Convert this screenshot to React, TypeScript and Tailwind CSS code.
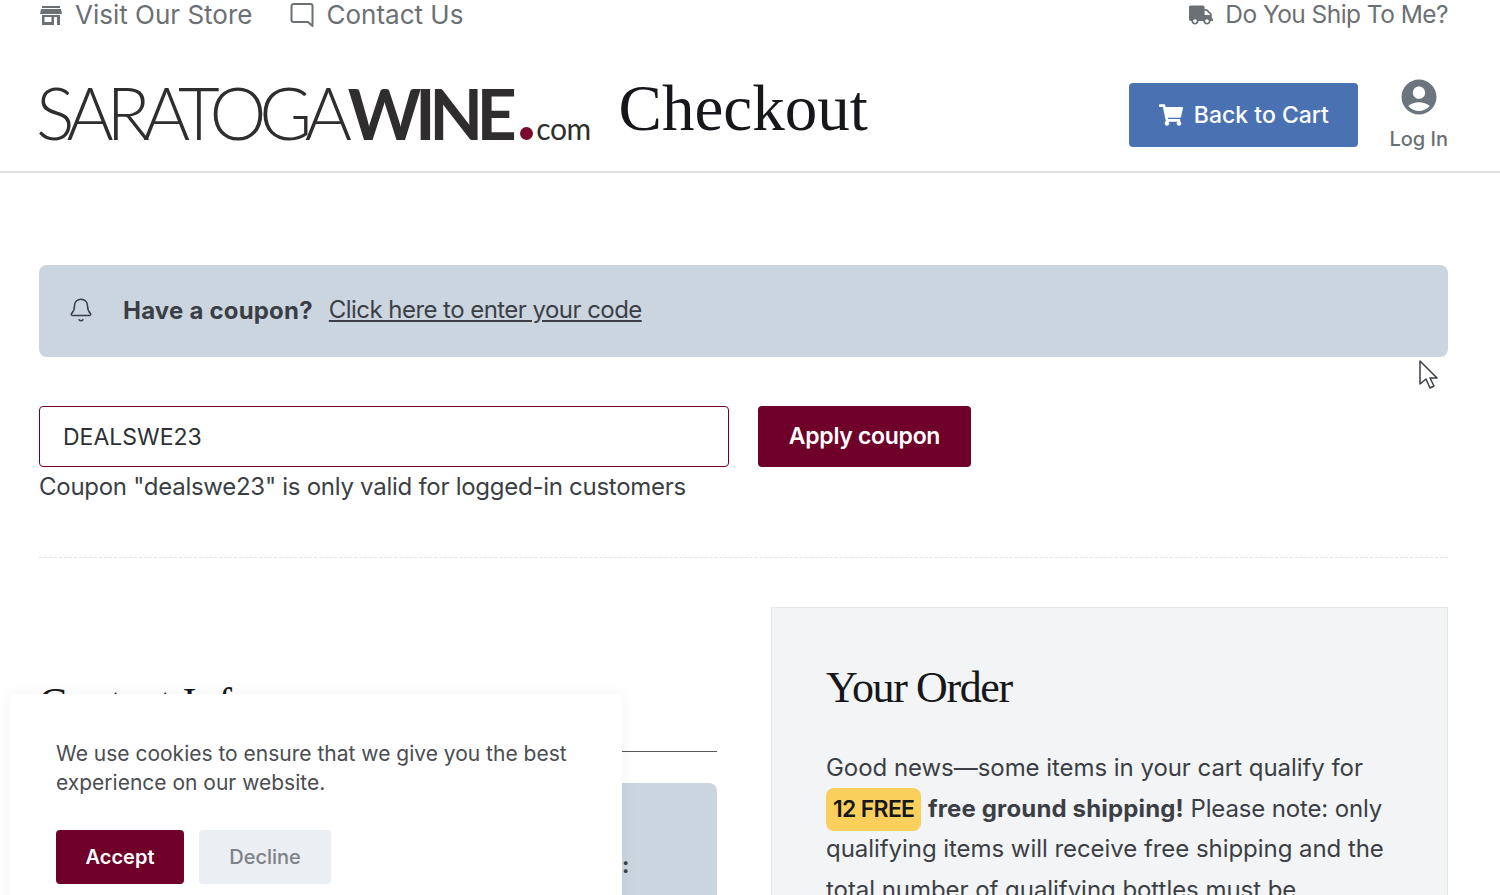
import React from "react";
import { FaShoppingCart, FaTruck } from "react-icons/fa";
import { MdAccountCircle } from "react-icons/md";
import { Bell } from "lucide-react";

const StoreIcon = () => (
  <svg width="24" height="22" viewBox="0 0 24 22" fill="#6b7075">
    <path d="M3 2h18v2H3z" />
    <path d="M2 5h20l1 5H1z" />
    <path d="M3 11h18v10h-3v-8h-3v8H3zM5.5 13v5h7v-5z" fillRule="evenodd" />
  </svg>
);

const ChatIcon = () => (
  <svg width="24" height="26" viewBox="0 0 24 26" fill="none" stroke="#6b7075" strokeWidth="2" strokeLinejoin="round">
    <path d="M3.5 2h17a2 2 0 0 1 2 2v20l-4.5-4H3.5a2 2 0 0 1-2-2V4a2 2 0 0 1 2-2z" />
  </svg>
);

const Cursor = () => (
  <svg width="20" height="30" viewBox="0 0 20 30" fill="#fff" stroke="#3a3f47" strokeWidth="1.5" strokeLinejoin="round">
    <path d="M1 1v23l6-5 4 9 4-2-4-8h7z" />
  </svg>
);

const Logo = () => (
  <div className="flex items-baseline -ml-[3px] -mt-[4px] font-['Lato',sans-serif] text-[#2f2d2e] leading-none">
    <span className="text-[72px] font-light tracking-[-7.2px]">SARATOGA</span>
    <span className="text-[70px] font-bold tracking-[-6.5px] ml-[3px]">WINE</span>
    <span className="ml-[10px] mr-[3px] w-[13px] h-[13px] rounded-full bg-[#7a0a2e]" />
    <span className="text-[30px] tracking-[-0.5px]">com</span>
  </div>
);

export default function App() {
  return (
    <div className="relative h-[895px] overflow-hidden bg-white font-['Inter',sans-serif] text-[#3b3f45]">
      {/* top links */}
      <div className="flex justify-between pl-[39px] pr-[52px] h-[29px] items-center text-[#6b7075]">
        <div className="flex gap-[38px] text-[26px]">
          <a className="flex items-center gap-[12px]"><StoreIcon /> Visit Our Store</a>
          <a className="flex items-center gap-[12px]"><ChatIcon /> Contact Us</a>
        </div>
        <a className="flex items-center gap-[12px] text-[24.5px] tracking-[-0.55px]"><FaTruck size={24} color="#6b7075" /> Do You Ship To Me?</a>
      </div>

      {/* header */}
      <header className="flex items-center justify-between h-[144px] pt-[28px] pl-[39px] pr-[52px] border-b-2 border-[#dddfe2]">
        <div className="flex items-center gap-[28px]">
          <Logo />
          <h1 className="font-['Liberation_Serif',serif] text-[65px] leading-none text-[#15171a] -mt-[12px]">Checkout</h1>
        </div>
        <div className="flex items-center gap-[31px]">
          <button className="flex items-center justify-center gap-[11px] w-[229px] h-[64px] mt-[2px] rounded bg-[#4a72b2] text-white text-[23px] font-medium">
            <FaShoppingCart size={24} /> Back to Cart
          </button>
          <div className="flex flex-col items-center text-[#6b7075] text-[20px] font-medium">
            <MdAccountCircle size={42} color="#6c757d" />
            <span className="mt-[8px] leading-[26px]">Log In</span>
          </div>
        </div>
      </header>

      <main className="pl-[39px] pr-[52px] pt-[92px]">
        {/* coupon notice */}
        <div className="flex items-center h-[92px] pb-[2px] rounded-lg bg-[#cbd5e0] pl-[29px] text-[24px]">
          <Bell size={26} strokeWidth={1.4} color="#3b3f45" />
          <strong className="ml-[29px] mt-[1px] font-bold tracking-[0.2px]">Have a coupon?</strong>
          <a className="ml-[16px] underline tracking-[-0.55px]">Click here to enter your code</a>
        </div>

        {/* coupon form */}
        <div className="flex gap-[29px] mt-[49px]">
          <input
            readOnly
            value="DEALSWE23"
            className="w-[690px] h-[61px] rounded border-[1.5px] border-[#74002a] px-[23px] text-[23px] text-[#2d3035] outline-none"
          />
          <button className="w-[213px] h-[61px] rounded bg-[#6f0029] text-white text-[23px] font-semibold tracking-[-0.3px]">Apply coupon</button>
        </div>
        <p className="mt-[4px] text-[24px] leading-[32px] tracking-[-0.27px]">Coupon "dealswe23" is only valid for logged-in customers</p>

        <div className="mt-[54px] border-t border-dashed border-[#e2e4e8]" />

        <div className="flex gap-[54px] mt-[49px]">
          {/* contact column */}
          <section className="w-[678px] pt-[72px]">
            <h2 className="font-['Liberation_Serif',serif] text-[42px] leading-[48px] text-[#15171a] pb-[24px] border-b border-[#55585c] tracking-[0.3px]">Contact Info</h2>
            <div className="mt-[31px] h-[200px] rounded-t-lg bg-[#cbd5e0] pl-[583px] pt-[71px] text-[22px] font-bold leading-none">:</div>
          </section>

          {/* order panel */}
          <aside className="flex-1 h-[400px] bg-[#f3f4f6] border border-[#e5e7eb] pl-[54px] pr-[40px] pt-[56px]">
            <h2 className="font-['Liberation_Serif',serif] text-[44px] leading-[48px] text-[#15171a] tracking-[-1.4px]">Your Order</h2>
            <p className="mt-[36px] text-[24px] leading-[40.5px] tracking-[-0.05px]">
              Good news—some items in your cart qualify for{" "}
              <span className="inline-block h-[43px] -my-[5px] leading-[43px] px-[7px] rounded-lg bg-[#fbcf5c] font-semibold text-[23px] text-[#15171a] tracking-[-0.7px]">12 FREE</span>{" "}
              <strong className="font-bold tracking-[0.15px]">free ground shipping!</strong> <span className="tracking-[-0.15px]">Please note: only</span> qualifying items will receive free shipping and the total number of qualifying bottles must be
            </p>
          </aside>
        </div>
      </main>

      {/* cookie notice */}
      <div className="absolute left-[10px] top-[694px] w-[612px] h-[240px] bg-white shadow-[0_0_16px_rgba(0,0,0,0.05)] px-[46px] pt-[45px]">
        <p className="text-[21px] leading-[29px] text-[#4a4d52]">We use cookies to ensure that we give you the best experience on our website.</p>
        <div className="flex gap-[15px] mt-[33px]">
          <button className="w-[128px] h-[54px] rounded bg-[#6f0029] text-white text-[20px] font-semibold">Accept</button>
          <button className="w-[132px] h-[54px] rounded bg-[#ebeef2] text-[#7d8188] text-[20px] font-medium">Decline</button>
        </div>
      </div>

      {/* mouse pointer */}
      <div className="absolute left-[1419px] top-[360px]"><Cursor /></div>
    </div>
  );
}
